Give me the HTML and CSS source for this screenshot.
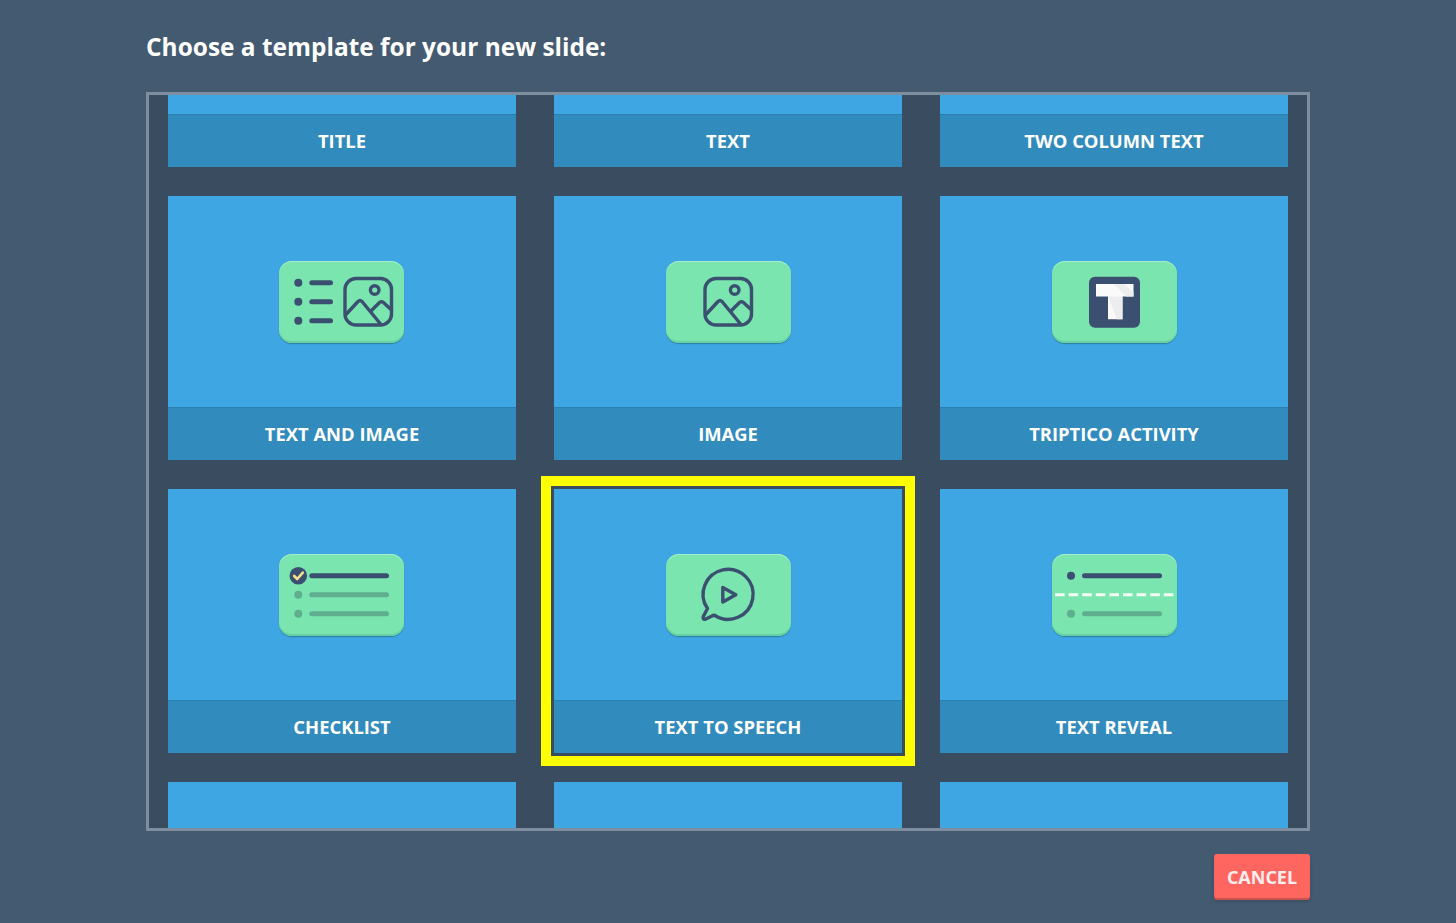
FILE: index.html
```html
<!DOCTYPE html>
<html lang="en">
<head>
<meta charset="utf-8">
<title>Choose a template</title>
<link rel="stylesheet" href="styles.css">
</head>
<body>
<main class="dialog">
  <h1 class="heading">Choose a template for your new slide:</h1>
  <section class="panel">
    <div class="grid">
      <article class="tile"><div class="thumb"></div><div class="label">TITLE</div></article>
      <article class="tile"><div class="thumb"></div><div class="label">TEXT</div></article>
      <article class="tile"><div class="thumb"></div><div class="label">TWO COLUMN TEXT</div></article>

      <article class="tile">
        <div class="thumb thumb-first"><div class="pill">
          <svg class="glyph" viewBox="0 0 125 82">
            <circle class="dot" cx="19.3" cy="21.7" r="4"/><line class="bar" x1="32.8" y1="21.7" x2="51.5" y2="21.7"/>
            <circle class="dot" cx="19.3" cy="40.7" r="4"/><line class="bar" x1="32.8" y1="40.7" x2="51.5" y2="40.7"/>
            <circle class="dot" cx="19.3" cy="59.7" r="4"/><line class="bar" x1="32.8" y1="59.7" x2="51.5" y2="59.7"/>
            <g class="outline">
              <rect x="66" y="17.5" width="46.5" height="46.5" rx="11"/>
              <circle cx="95.7" cy="29" r="4.3"/>
              <path d="M66.5 54 L79 40.5 Q81 38.5 83 40.5 L102 63.5"/>
              <path d="M92.5 49.5 L100.5 41.5 Q102.5 39.8 104.5 41.5 L112.5 49"/>
            </g>
          </svg>
        </div></div>
        <div class="label">TEXT AND IMAGE</div>
      </article>

      <article class="tile">
        <div class="thumb"><div class="pill">
          <svg class="glyph" viewBox="0 0 125 82">
            <g class="outline">
              <rect x="39" y="17.5" width="46.5" height="46.5" rx="11"/>
              <circle cx="68.7" cy="29" r="4.3"/>
              <path d="M39.5 54 L52 40.5 Q54 38.5 56 40.5 L75 63.5"/>
              <path d="M65.5 49.5 L73.5 41.5 Q75.5 39.8 77.5 41.5 L85.5 49"/>
            </g>
          </svg>
        </div></div>
        <div class="label">IMAGE</div>
      </article>

      <article class="tile">
        <div class="thumb"><div class="pill">
          <svg class="glyph" viewBox="0 0 125 82">
            <rect class="tile-mark" x="37" y="15.7" width="51" height="51" rx="6"/>
            <path class="t-face" d="M44 23 H81.5 V35.5 H70.5 V58.3 H56 V35.5 H44 Z"/>
            <path class="t-shade" d="M56 35.5 H70.5 V58.3 H65 Z"/>
            <path class="t-shade" d="M62 23 H72 L81.5 31 V35.5 H74 Z"/>
          </svg>
        </div></div>
        <div class="label">TRIPTICO ACTIVITY</div>
      </article>

      <article class="tile">
        <div class="thumb thumb-first"><div class="pill">
          <svg class="glyph" viewBox="0 0 125 82">
            <circle class="dot" cx="19.3" cy="21.7" r="8.8"/>
            <path class="tick" d="M15.2 22 L18.2 25 L23.8 18.6"/>
            <line class="bar" x1="32.8" y1="21.7" x2="107.5" y2="21.7"/>
            <circle class="dot-muted" cx="19.3" cy="40.7" r="4"/><line class="bar-muted" x1="32.8" y1="40.7" x2="107.5" y2="40.7"/>
            <circle class="dot-muted" cx="19.3" cy="59.7" r="4"/><line class="bar-muted" x1="32.8" y1="59.7" x2="107.5" y2="59.7"/>
          </svg>
        </div></div>
        <div class="label">CHECKLIST</div>
      </article>

      <article class="tile tile-selected">
        <div class="thumb"><div class="pill">
          <svg class="glyph" viewBox="0 0 125 82">
            <g class="outline">
              <path d="M48.5 61.3 A25 25 0 1 0 41.5 54.5 L37.3 62.5 Q36.3 65.6 39.3 65.2 L46 62 Q47.3 61.1 48.5 61.3 Z"/>
              <path d="M56.8 33.5 L69.8 40.7 L56.8 48 Z"/>
            </g>
          </svg>
        </div></div>
        <div class="label">TEXT TO SPEECH</div>
      </article>

      <article class="tile">
        <div class="thumb"><div class="pill">
          <svg class="glyph" viewBox="0 0 125 82">
            <circle class="dot" cx="19" cy="21.7" r="4"/><line class="bar" x1="32.5" y1="21.7" x2="107.5" y2="21.7"/>
            <line class="dash" x1="3" y1="40.7" x2="122.5" y2="40.7"/>
            <circle class="dot-muted" cx="19" cy="59.7" r="4"/><line class="bar-muted" x1="32.5" y1="59.7" x2="107.5" y2="59.7"/>
          </svg>
        </div></div>
        <div class="label">TEXT REVEAL</div>
      </article>

      <article class="tile"><div class="thumb"></div><div class="label"></div></article>
      <article class="tile"><div class="thumb"></div><div class="label"></div></article>
      <article class="tile"><div class="thumb"></div><div class="label"></div></article>
    </div>
  </section>
  <footer class="actions">
    <button class="cancel" type="button">CANCEL</button>
  </footer>
</main>
</body>
</html>
```

FILE: styles.css
```css
* { box-sizing: border-box; }

html, body { height: 100%; }

body {
  margin: 0;
  background: #445a70;
  font-family: "Open Sans", "Liberation Sans", sans-serif;
  color: #fff;
  overflow: hidden;
}

.dialog {
  display: flex;
  flex-direction: column;
  padding: 0 146px;
}

.heading {
  margin: 0;
  height: 92px;
  padding-top: 30px;
  font-size: 24.45px;
  line-height: 34px;
  font-weight: 700;
}

.panel {
  height: 739px;
  border: 3px solid #7f8e9f;
  background: #394c60;
  padding: 0 19px;
  overflow: hidden;
}

.grid {
  display: grid;
  grid-template-columns: repeat(3, 348px);
  column-gap: 38px;
  row-gap: 29px;
  margin-top: -192px;
}

.tile {
  position: relative;
  display: flex;
  flex-direction: column;
  height: 264px;
}

.tile-selected::after {
  content: "";
  position: absolute;
  inset: 0;
  box-shadow: 0 0 0 3px #394c60, 0 0 0 13px #ffff00;
}

.thumb {
  height: 211px;
  background: #3ea6e2;
  display: flex;
  align-items: center;
  justify-content: center;
}

.thumb-first {
  padding-right: 1px;
}

.label {
  height: 53px;
  padding-bottom: 2px;
  background: #318bbc;
  border-top: 1px solid #2b7eae;
  display: flex;
  align-items: center;
  justify-content: center;
  font-size: 18.4px;
  font-weight: 700;
}

.pill {
  width: 125px;
  height: 82px;
  border-radius: 13px;
  background: #7be5af;
  box-shadow: inset 0 1px 0 #a4efc9, inset 0 -2px 0 #68d0a4, 0 1px 1px #2a7fa0;
}

.glyph {
  display: block;
  width: 125px;
  height: 82px;
}

.dot { fill: #3b5070; }
.dot-muted { fill: #5fae90; }

.bar, .bar-muted {
  stroke-width: 5;
  stroke-linecap: round;
}
.bar { stroke: #3b5070; }
.bar-muted { stroke: #5fae90; }

.outline {
  fill: none;
  stroke: #3b5070;
  stroke-width: 3.4;
  stroke-linecap: round;
  stroke-linejoin: round;
}

.tick {
  fill: none;
  stroke: #f6e08c;
  stroke-width: 2.6;
  stroke-linecap: round;
  stroke-linejoin: round;
}

.dash {
  stroke: #f4fbf6;
  stroke-width: 3;
  stroke-dasharray: 9.6 4;
}

.tile-mark { fill: #3b5070; }
.t-face { fill: #fafafa; }
.t-shade { fill: #eceeee; }

.actions {
  display: flex;
  justify-content: flex-end;
  padding-top: 23px;
}

.cancel {
  width: 96px;
  height: 44px;
  padding: 2px 0 0;
  border: 0;
  border-radius: 3px;
  background: #ff6660;
  box-shadow: 0 2px 0 #c9524f, 0 3px 3px rgba(30, 40, 55, 0.3);
  color: #fbeeee;
  font-family: inherit;
  font-size: 18px;
  font-weight: 700;
}
```
